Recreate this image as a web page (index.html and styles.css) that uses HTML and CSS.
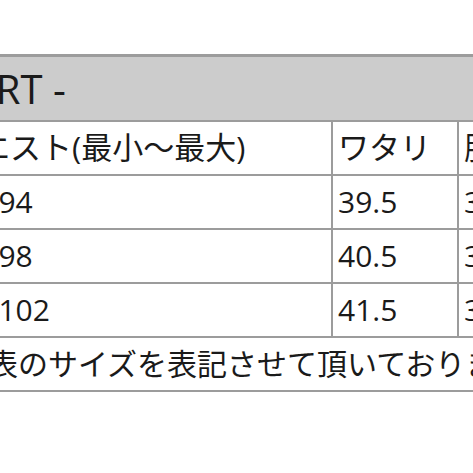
FILE: index.html
```html
<!DOCTYPE html>
<html lang="ja">
<head>
<meta charset="utf-8">
<title>SIZE CHART</title>
<link rel="stylesheet" href="styles.css">
</head>
<body>
<div class="viewport">
  <table class="chart">
    <colgroup>
      <col class="c1">
      <col class="c2">
      <col class="c3">
    </colgroup>
    <thead>
      <tr><th class="title" colspan="3">- SIZE CHART -</th></tr>
    </thead>
    <tbody>
      <tr class="labels"><td class="first">ウエスト(最小〜最大)</td><td>ワタリ</td><td>股上</td></tr>
      <tr><td class="first">78~94</td><td>39.5</td><td>30.5</td></tr>
      <tr><td class="first">82~98</td><td>40.5</td><td>31</td></tr>
      <tr><td class="first">80~102</td><td>41.5</td><td>31.5</td></tr>
      <tr><td class="note" colspan="3">寸表のサイズを表記させて頂いております。</td></tr>
    </tbody>
  </table>
</div>
</body>
</html>
```

FILE: styles.css
```css
html, body {
  margin: 0;
  padding: 0;
  background: #ffffff;
}

.viewport {
  width: 473px;
  height: 473px;
  overflow: hidden;
  padding-top: 54px;
  box-sizing: border-box;
}

.chart {
  margin-left: -62px;
  border-collapse: collapse;
  table-layout: fixed;
  width: 660px;
  font-family: "Open Sans", "Noto Sans CJK JP", sans-serif;
  font-size: 30px;
  color: #1a1a1a;
}

.c1 { width: 393px; }
.c2 { width: 126px; }
.c3 { width: 141px; }

.chart th,
.chart td {
  border: 2px solid #9c9c9c;
  padding: 0 0 0 5px;
  height: 52px;
  line-height: 1.2;
  vertical-align: middle;
  text-align: left;
  white-space: nowrap;
  overflow: hidden;
  font-weight: normal;
}

.chart th.title {
  border-top-width: 3px;
  background: #cccccc;
  height: 63px;
  font-size: 40px;
  text-indent: -141px;
}

.chart td.first {
  padding-left: 7px;
}

.chart tr.labels td {
  font-size: 31px;
}

.chart tr.labels td.first {
  padding-left: 8px;
}

.chart td.note {
  padding-left: 18px;
}
```
